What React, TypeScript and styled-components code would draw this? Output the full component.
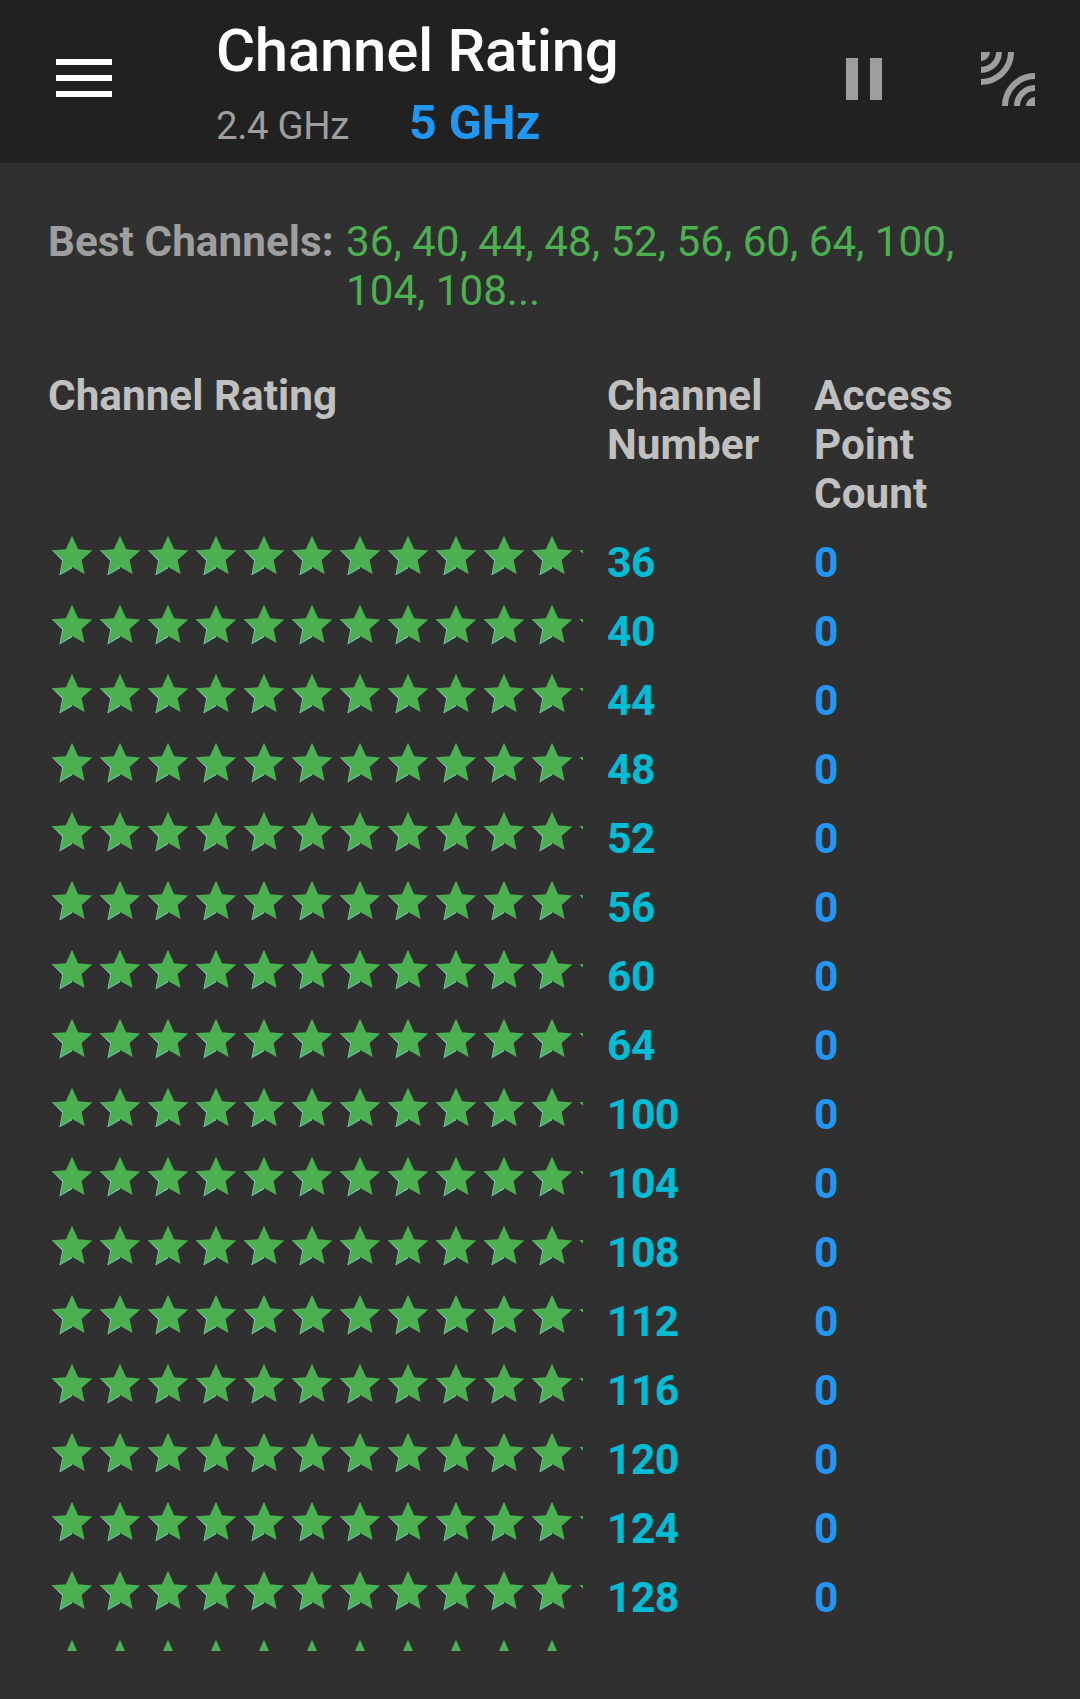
import React from "react";
import styled, { createGlobalStyle } from "styled-components";

const GlobalStyle = createGlobalStyle`
  html, body { margin: 0; background: #303030; }
  body { font-family: Roboto, "Liberation Sans", sans-serif; }
  * { box-sizing: border-box; }
`;

const Screen = styled.div`
  width: 1080px;
  height: 1699px;
  display: flex;
  flex-direction: column;
  background: #303030;
  overflow: hidden;
`;

const AppBar = styled.header`
  height: 163px;
  flex: none;
  display: flex;
  align-items: flex-start;
  background: #212121;
`;

const MenuButton = styled.button`
  width: 56px;
  height: 38px;
  margin: 59px 0 0 56px;
  padding: 0;
  border: 0;
  background: none;
  display: flex;
  flex-direction: column;
  justify-content: space-between;
`;

const MenuLine = styled.span`
  width: 56px;
  height: 6px;
  background: #fff;
`;

const Titles = styled.div`
  width: 620px;
  margin-left: 104px;
  padding-top: 16px;
`;

const Title = styled.h1`
  margin: 0;
  font-size: 60px;
  line-height: 70px;
  font-weight: 500;
  letter-spacing: -0.3px;
  color: #fff;
  white-space: nowrap;
`;

const Bands = styled.div`
  display: flex;
  align-items: baseline;
  gap: 60px;
  height: 56px;
  margin-top: 9px;
`;

const Band = styled.span<{ $active?: boolean }>`
  font-size: ${(p) => (p.$active ? 48.3 : 38.4)}px;
  line-height: 56px;
  font-weight: ${(p) => (p.$active ? 700 : 400)};
  letter-spacing: ${(p) => (p.$active ? 0 : -0.35)}px;
  color: ${(p) => (p.$active ? "#2196f3" : "#9e9e9e")};
  white-space: nowrap;
`;

const Actions = styled.div`
  display: flex;
  gap: 97px;
  padding-top: 52px;
  margin-left: 10px;
`;

const ActionIcon = styled.svg`
  display: block;
  flex: none;
`;

const Content = styled.main`
  height: 1488px;
  flex: none;
  padding: 54px 48px 0;
  overflow: hidden;
`;

const Best = styled.section`
  display: flex;
  font-size: 42.2px;
  line-height: 49px;
  height: 154px;
`;

const BestLabel = styled.div`
  width: 298px;
  flex: none;
  font-weight: 700;
  letter-spacing: 0.07px;
  color: #9e9e9e;
  white-space: nowrap;
`;

const BestList = styled.div`
  width: 640px;
  letter-spacing: -0.02px;
  color: #4caf50;
`;

const Row = styled.div`
  display: grid;
  grid-template-columns: 535px 207px 200px;
  column-gap: 0;
  height: 69px;
  font-size: 42.2px;
  line-height: 49px;
  font-weight: 700;
`;

const HeadRow = styled(Row)`
  height: 161px;
  letter-spacing: 0.05px;
  color: #c0c0c0;
`;

const HeadCell = styled.div<{ $inset?: number; $width?: number }>`
  padding-left: ${(p) => p.$inset ?? 0}px;
  width: ${(p) => (p.$width ? `${p.$width}px` : "auto")};
`;

const Stars = styled.div`
  display: flex;
  width: 535px;
  height: 48px;
  overflow: hidden;
`;

const StarSvg = styled.svg`
  flex: none;
  width: 48px;
  height: 48px;
`;

const Value = styled.div<{ $color: string; $inset: number }>`
  padding: 6px 0 0 ${(p) => p.$inset}px;
  font-size: 42.6px;
  letter-spacing: -0.5px;
  color: ${(p) => p.$color};
`;

const Star = () => (
  <StarSvg viewBox="0 0 48 48">
    <path d="M3.7 18.2L14.2 28.6L11.4 43.4L24 36.2L24 30L18 20Z" fill="#80cbc4" />
    <path
      d="M24 3.7L30.1 17.3L44.3 18.5L33.6 27.9L36.6 42L24 34.9L12.2 42.2L15.2 27.7L3.7 18.3L17.9 17.3Z"
      fill="#4caf50"
    />
  </StarSvg>
);

const channels = [36, 40, 44, 48, 52, 56, 60, 64, 100, 104, 108, 112, 116, 120, 124, 128, 132];
const STAR_COUNT = 12;

export default function App() {
  return (
    <>
      <GlobalStyle />
      <Screen>
        <AppBar>
          <MenuButton aria-label="Menu">
            <MenuLine />
            <MenuLine />
            <MenuLine />
          </MenuButton>
          <Titles>
            <Title>Channel Rating</Title>
            <Bands>
              <Band>2.4 GHz</Band>
              <Band $active>5 GHz</Band>
            </Bands>
          </Titles>
          <Actions>
            <ActionIcon width="38" height="54" viewBox="0 0 38 54" fill="#9e9e9e">
              <path d="M0 6h12v42H0zM24 6h12v42H24z" />
            </ActionIcon>
            <ActionIcon width="54" height="54" viewBox="0 0 54 54" fill="none" stroke="#9e9e9e" strokeWidth="6">
              <path d="M0 0h9a9 9 0 0 1-9 9zM54 54h-9a9 9 0 0 1 9-9z" fill="#9e9e9e" stroke="none" />
              <path d="M18 0A18 18 0 0 1 0 18M30 0A30 30 0 0 1 0 30" />
              <path d="M36 54A18 18 0 0 1 54 36M24 54A30 30 0 0 1 54 24" />
            </ActionIcon>
          </Actions>
        </AppBar>
        <Content>
          <Best>
            <BestLabel>Best Channels:</BestLabel>
            <BestList>36, 40, 44, 48, 52, 56, 60, 64, 100, 104, 108...</BestList>
          </Best>
          <HeadRow>
            <HeadCell>Channel Rating</HeadCell>
            <HeadCell $inset={24}>Channel Number</HeadCell>
            <HeadCell $inset={24} $width={170}>Access Point Count</HeadCell>
          </HeadRow>
          {channels.map((channel) => (
            <Row key={channel}>
              <Stars>
                {Array.from({ length: STAR_COUNT }, (_, i) => (
                  <Star key={i} />
                ))}
              </Stars>
              <Value $color="#00bcd4" $inset={24}>{channel}</Value>
              <Value $color="#2196f3" $inset={24}>0</Value>
            </Row>
          ))}
        </Content>
      </Screen>
    </>
  );
}
